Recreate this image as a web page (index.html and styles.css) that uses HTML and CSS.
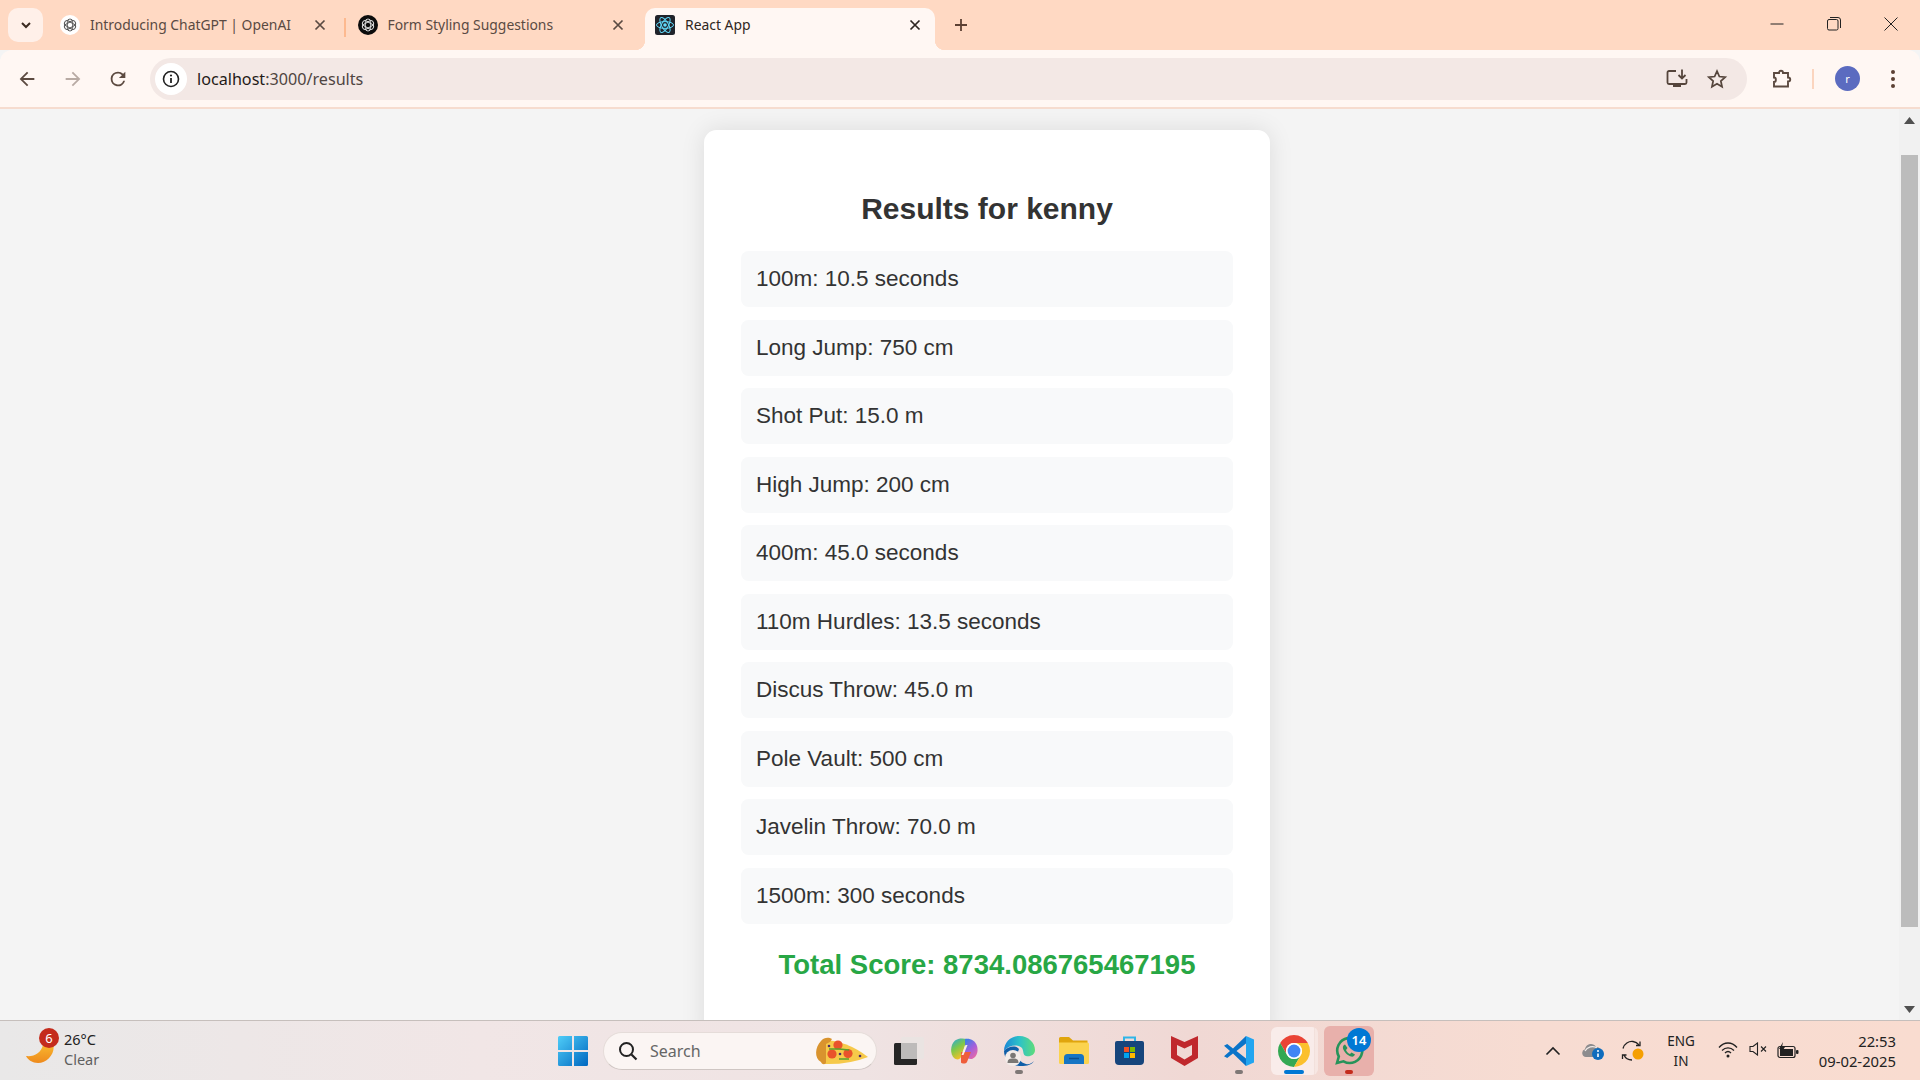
FILE: index.html
```html
<!DOCTYPE html>
<html lang="en">
<head>
<meta charset="utf-8">
<title>React App</title>
<link rel="stylesheet" href="styles.css">
</head>
<body>
<svg class="defs" width="0" height="0" aria-hidden="true">
  <symbol id="knot" viewBox="0 0 24 24">
    <g fill="none" stroke="currentColor" stroke-width="1.4">
      <rect x="8" y="3" width="8" height="18" rx="4"/>
      <rect x="8" y="3" width="8" height="18" rx="4" transform="rotate(60 12 12)"/>
      <rect x="8" y="3" width="8" height="18" rx="4" transform="rotate(120 12 12)"/>
    </g>
  </symbol>
  <symbol id="x" viewBox="0 0 12 12">
    <path d="M1.5 1.5l9 9M10.5 1.5l-9 9" fill="none" stroke="currentColor" stroke-width="1.7"/>
  </symbol>
</svg>

<header class="tabstrip">
  <button class="tab-search">
    <svg width="12" height="12" viewBox="0 0 12 12"><path d="M2 4l4 4 4-4" fill="none" stroke="#3b2a20" stroke-width="2"/></svg>
  </button>
  <div class="tabs">
    <div class="tab">
      <span class="fav fav-light"><svg width="16" height="16"><use href="#knot"/></svg></span>
      <span class="tab-title">Introducing ChatGPT | OpenAI</span>
      <svg class="tab-close" width="12" height="12"><use href="#x"/></svg>
    </div>
    <div class="tab tab-sep">
      <span class="fav fav-dark"><svg width="16" height="16"><use href="#knot"/></svg></span>
      <span class="tab-title">Form Styling Suggestions</span>
      <svg class="tab-close" width="12" height="12"><use href="#x"/></svg>
    </div>
    <div class="tab tab-active">
      <svg class="fav-react" width="20" height="20" viewBox="0 0 20 20">
        <rect width="20" height="20" rx="2.5" fill="#20232a"/>
        <g fill="none" stroke="#61dafb" stroke-width="1">
          <ellipse cx="10" cy="10" rx="8.5" ry="3.4"/>
          <ellipse cx="10" cy="10" rx="8.5" ry="3.4" transform="rotate(60 10 10)"/>
          <ellipse cx="10" cy="10" rx="8.5" ry="3.4" transform="rotate(120 10 10)"/>
        </g>
        <circle cx="10" cy="10" r="1.8" fill="#61dafb"/>
      </svg>
      <span class="tab-title">React App</span>
      <svg class="tab-close" width="12" height="12"><use href="#x"/></svg>
    </div>
  </div>
  <button class="new-tab">
    <svg width="14" height="14" viewBox="0 0 14 14"><path d="M7 1v12M1 7h12" stroke="#5c4033" stroke-width="1.8"/></svg>
  </button>
  <div class="win-controls">
    <span class="win-btn"><svg width="14" height="14" viewBox="0 0 14 14"><path d="M0.5 7h13" stroke="#222" stroke-width="1"/></svg></span>
    <span class="win-btn"><svg width="14" height="14" viewBox="0 0 14 14"><rect x="0.5" y="2.5" width="10.5" height="10.5" rx="1.5" fill="none" stroke="#222"/><path d="M3 .5h8a2.500 2.500 0 0 1 2.500 2.500v8" fill="none" stroke="#222"/></svg></span>
    <span class="win-btn"><svg width="14" height="14" viewBox="0 0 14 14"><path d="M.5.500l13 13M13.500.500l-13 13" stroke="#222" stroke-width="1"/></svg></span>
  </div>
</header>

<nav class="toolbar">
  <div class="nav-btns">
    <span class="nav-btn"><svg width="22" height="22" viewBox="0 0 24 24"><path d="M20 11H7.830l5.590-5.590L12 4l-8 8 8 8 1.410-1.410L7.830 13H20z" fill="#5c4a40"/></svg></span>
    <span class="nav-btn"><svg width="22" height="22" viewBox="0 0 24 24"><path d="M4 13h12.170l-5.590 5.590L12 20l8-8-8-8-1.410 1.410L16.170 11H4z" fill="#b8aaa3"/></svg></span>
    <span class="nav-btn"><svg width="22" height="22" viewBox="0 0 24 24"><path d="M17.650 6.350A7.960 7.960 0 0 0 12 4a8 8 0 1 0 7.730 10h-2.080A6 6 0 1 1 12 6c1.660 0 3.140.690 4.220 1.780L13 11h7V4z" fill="#5c4a40"/></svg></span>
  </div>
  <div class="omnibox">
    <span class="info-chip"><svg width="18" height="18" viewBox="0 0 18 18"><circle cx="9" cy="9" r="7.500" fill="none" stroke="#222" stroke-width="1.600"/><path d="M9 8v5" stroke="#222" stroke-width="1.800"/><circle cx="9" cy="5.500" r="1.100" fill="#222"/></svg></span>
    <span class="url"><span class="url-host">localhost</span>:3000/results</span>
    <span class="omni-icons">
      <svg width="22" height="22" viewBox="0 0 22 22"><path d="M10 3H3a1.500 1.500 0 0 0-1.500 1.500v10A1.500 1.500 0 0 0 3 16h16a1.500 1.500 0 0 0 1.500-1.500V11" fill="none" stroke="#55453c" stroke-width="1.800"/><path d="M16 1.500V10M12.500 7l3.500 3.500L19.500 7" fill="none" stroke="#55453c" stroke-width="1.800"/><path d="M7 16.500h8V19H7z" fill="#55453c"/></svg>
      <svg width="22" height="22" viewBox="0 0 24 24"><path d="M12 3.500l2.600 5.800 6.300.7-4.700 4.200 1.300 6.200L12 17.200l-5.500 3.200 1.300-6.200L3.100 10l6.300-.7z" fill="none" stroke="#55453c" stroke-width="1.900"/></svg>
    </span>
  </div>
  <div class="tool-right">
    <span class="ext"><svg width="22" height="22" viewBox="0 0 22 22"><path d="M3 5h5c0-3 4-3 4 0h5v4.500c3 0 3 4 0 4V18.500H3v-4.500c2.500 0 2.500-4.500 0-4.500z" fill="none" stroke="#5c4a40" stroke-width="1.900"/></svg></span>
    <span class="tool-sep"></span>
    <span class="avatar">r</span>
    <span class="menu"><i></i><i></i><i></i></span>
  </div>
</nav>

<div class="viewport">
  <main class="page">
    <section class="card">
      <h2 class="card-title">Results for kenny</h2>
      <ul class="results">
        <li class="result">100m: 10.5 seconds</li>
        <li class="result">Long Jump: 750 cm</li>
        <li class="result">Shot Put: 15.0 m</li>
        <li class="result">High Jump: 200 cm</li>
        <li class="result">400m: 45.0 seconds</li>
        <li class="result">110m Hurdles: 13.5 seconds</li>
        <li class="result">Discus Throw: 45.0 m</li>
        <li class="result">Pole Vault: 500 cm</li>
        <li class="result">Javelin Throw: 70.0 m</li>
        <li class="result">1500m: 300 seconds</li>
      </ul>
      <h3 class="total">Total Score: 8734.086765467195</h3>
    </section>
  </main>
  <aside class="scrollbar">
    <svg class="arrow" width="11" height="7" viewBox="0 0 11 7"><path d="M5.500 0L11 7H0z" fill="#505050"/></svg>
    <div class="track"><div class="thumb"></div></div>
    <svg class="arrow" width="11" height="7" viewBox="0 0 11 7"><path d="M0 0h11L5.500 7z" fill="#505050"/></svg>
  </aside>
</div>

<footer class="taskbar">
  <div class="weather">
    <span class="weather-icon">
      <svg width="28" height="18" viewBox="0 0 28 18"><defs><linearGradient id="moon" x1="0" y1="0" x2="0" y2="1"><stop offset="0" stop-color="#f8b62e"/><stop offset="1" stop-color="#ee8a1d"/></linearGradient></defs><path d="M0 11C8 12 15 8 17 0h10.500C29 9 21 18 12 18 6.500 18 2 15 0 11z" fill="url(#moon)"/></svg>
      <span class="weather-badge">6</span>
    </span>
    <span class="weather-text"><span class="temp">26°C</span><span class="cond">Clear</span></span>
  </div>

  <div class="apps">
    <span class="slot">
      <svg width="30" height="30" viewBox="0 0 30 30"><defs><linearGradient id="win" x1="0" y1="0" x2="1" y2="1"><stop offset="0" stop-color="#4fcdf8"/><stop offset="1" stop-color="#0067c0"/></linearGradient></defs><path d="M0 1.500A1.500 1.500 0 0 1 1.500 0H14v14H0zM16 0h12.500A1.500 1.500 0 0 1 30 1.500V14H16zM0 16h14v14H1.500A1.500 1.500 0 0 1 0 28.500zM16 16h14v12.500a1.500 1.500 0 0 1-1.500 1.500H16z" fill="url(#win)"/></svg>
    </span>
    <div class="searchbox">
      <svg width="20" height="20" viewBox="0 0 20 20"><circle cx="8.500" cy="8.500" r="6.500" fill="none" stroke="#222" stroke-width="2"/><path d="M13.500 13.500l5 5" stroke="#222" stroke-width="2.200"/></svg>
      <span class="search-label">Search</span>
      <svg class="pizza" width="54" height="28" viewBox="0 0 54 28">
        <path d="M8 3Q32 3 54 20Q34 28 9 27z" fill="#f6c94a"/>
        <path d="M7 4C10 0 15 0 18 2L16 5 12 7 12 25C12 28 8 28 7 25 0 21 1 10 7 4z" fill="#d9932e"/>
        <circle cx="24" cy="8" r="4.600" fill="#e9532b"/>
        <circle cx="18" cy="17" r="4.600" fill="#e9532b"/>
        <circle cx="34" cy="16.500" r="4.600" fill="#e9532b"/>
        <path d="M15 12l10 0M25 12l10 1M25 22l10 0" stroke="#5aa02c" stroke-width="1.400"/>
        <circle cx="46" cy="19" r="1.300" fill="#4b2a6a"/>
        <circle cx="26" cy="17" r="1.300" fill="#4b2a6a"/>
        <circle cx="15" cy="9" r="1.300" fill="#4b2a6a"/>
      </svg>
    </div>
    <div class="app-icons">
      <span class="slot">
        <svg width="30" height="28" viewBox="0 0 30 28"><rect y="6" width="23" height="22" rx="1.500" fill="#262626"/><rect x="7" width="23" height="22" rx="1.500" fill="#e9e4e2" fill-opacity=".85"/><rect x="7" y="6" width="16" height="16" fill="#bdbbba"/></svg>
      </span>
      <span class="slot">
        <svg width="28" height="26" viewBox="0 0 28 26"><defs><linearGradient id="cp1" x1="0" y1="0" x2=".5" y2="1"><stop offset="0" stop-color="#1fa6e8"/><stop offset=".5" stop-color="#7fc84a"/><stop offset="1" stop-color="#f7c027"/></linearGradient><linearGradient id="cp2" x1=".2" y1="0" x2=".8" y2="1"><stop offset="0" stop-color="#3d7fe6"/><stop offset=".5" stop-color="#a35fdc"/><stop offset="1" stop-color="#f06aa0"/></linearGradient></defs><path d="M5 2.500C8 0 13 0 17 1L11 19C10 22 6 22 4 20 0 16 0 7 5 2.500z" fill="url(#cp1)"/><path d="M15 1C20 0 25 2.500 27 8 28.500 13 27 19 22 21 19 21.500 16 20 15 17z" fill="url(#cp2)"/><path d="M11 14h10l-4 10c-1 2-5 2-6 .5z" fill="#ef5d3a"/><path d="M15.500 7h2l-4 10h-2z" fill="#fbeeea"/></svg>
      </span>
      <span class="slot">
        <svg width="31" height="30" viewBox="0 0 31 30"><defs><linearGradient id="ed" x1="0" y1=".5" x2="1" y2=".5"><stop offset="0" stop-color="#1b87d6"/><stop offset=".5" stop-color="#2cc2c8"/><stop offset="1" stop-color="#5fdc7a"/></linearGradient></defs><path d="M0 15C0 6 7 0 15.500 0 24.500 0 31 7 31 14 31 19 26 21 22 20 18.500 19 20 15 18 12 14 8 5 9 0 15z" fill="url(#ed)"/><path d="M0 15C4 10 12 9 15 13 12 19 14 26 22 28 25 29 28 27 30 25 27 30 20 30 15.500 30 7 30 0 23 0 15z" fill="#0f5ea8"/><circle cx="9" cy="22" r="8" fill="#f3ece9"/><circle cx="9" cy="19.500" r="2.800" fill="#7a7775"/><path d="M3.500 27c0-4 2.500-4.500 5.500-4.500s5.500.5 5.500 4.500z" fill="#7a7775"/></svg>
        <i class="dot dot-grey"></i>
      </span>
      <span class="slot">
        <svg width="30" height="27" viewBox="0 0 30 27"><path d="M0 1.500A1.500 1.500 0 0 1 1.500 0H10l4 3.500h14.500V12H0z" fill="#e0a50d"/><path d="M0 5.500h28.500A1.500 1.500 0 0 1 30 7v18.500a1.500 1.500 0 0 1-1.500 1.500h-27A1.500 1.500 0 0 1 0 25.500z" fill="#fbd34f"/><path d="M5 27v-6.500A3.500 3.500 0 0 1 8.500 17h13a3.500 3.500 0 0 1 3.500 3.500V27z" fill="#1675c4"/><path d="M10 21.500h10" stroke="#0c4f8e" stroke-width="1.500"/></svg>
      </span>
      <span class="slot">
        <svg width="29" height="29" viewBox="0 0 29 29"><path d="M9 6V1.500h11V6" fill="none" stroke="#2fb5e8" stroke-width="2"/><path d="M0 7a2 2 0 0 1 2-2h25a2 2 0 0 1 2 2v18a4 4 0 0 1-4 4H4a4 4 0 0 1-4-4z" fill="#16457c"/><rect x="9" y="11" width="5" height="5" fill="#f25022"/><rect x="15" y="11" width="5" height="5" fill="#7fba00"/><rect x="9" y="17" width="5" height="5" fill="#00a4ef"/><rect x="15" y="17" width="5" height="5" fill="#ffb900"/></svg>
      </span>
      <span class="slot">
        <svg width="27" height="30" viewBox="0 0 27 30"><path fill-rule="evenodd" d="M0 0l13.500 6L27 0v22L13.500 30 0 22zM6 9v10l7.500 4.500L21 19V9l-7.500 3.500z" fill="#c0282d"/></svg>
      </span>
      <span class="slot">
        <svg width="30" height="30" viewBox="0 0 30 30"><path d="M22 0L9 12.500 3.200 8 0 9.700 6 15 0 20.300 3.200 22 9 17.500 22 30V22.500L12.500 15 22 7.500z" fill="#0a74c9"/><path d="M22 0l8 3.500v23L22 30z" fill="#22a5f0"/></svg>
        <i class="dot dot-grey"></i>
      </span>
      <span class="slot">
        <span class="tile-chrome">
          <svg width="32" height="32" viewBox="2 2 44 44"><path d="M24 13H43.050A22 22 0 0 0 4.950 13L14.470 29.500A11 11 0 0 1 24 13z" fill="#ea4335"/><path d="M14.470 29.500L4.950 13A22 22 0 0 0 24 46L33.530 29.500A11 11 0 0 1 14.470 29.500z" fill="#34a853"/><path d="M33.530 29.500L24 46A22 22 0 0 0 43.050 13H24A11 11 0 0 1 33.530 29.500z" fill="#fbc02d"/><circle cx="24" cy="24" r="11" fill="#fff"/><circle cx="24" cy="24" r="8.800" fill="#4285f4"/></svg>
        </span>
        <i class="dot dot-blue"></i>
      </span>
      <span class="slot">
        <span class="tile-wa">
          <svg width="30" height="30" viewBox="0 0 30 30"><path d="M3 27l1.800-6.500A12.500 12.500 0 1 1 9.500 25.300z" fill="none" stroke="#27935a" stroke-width="2.600"/><path d="M11 8.500c-1.500.5-2.500 2-2 4 1 3.500 4.500 7 8 8 2 .5 3.500-.5 4-2l-3.500-2-1.500 1.500c-1.500-.5-3.500-2.500-4-4L13.500 12z" fill="#27935a"/></svg>
          <span class="wa-badge">14</span>
        </span>
        <i class="dot dot-red"></i>
      </span>
    </div>
  </div>

  <div class="tray">
    <span class="tray-slot"><svg width="16" height="10" viewBox="0 0 16 10"><path d="M1.500 8.500L8 2l6.500 6.500" fill="none" stroke="#222" stroke-width="1.600"/></svg></span>
    <span class="tray-slot">
      <svg width="22" height="18" viewBox="0 0 22 18"><path d="M4 15a4 4 0 0 1-1-7.800C4 2 11 0 14 5c3 0 5 2 5 5v5z" fill="#8d8c8e"/><path d="M3 9c2-4 8-6 12-3" fill="none" stroke="#f3ece9" stroke-width="1.200"/><circle cx="16" cy="12" r="6" fill="#0f6cbd"/><path d="M16 11.500v3.500" stroke="#fff" stroke-width="1.600"/><circle cx="16" cy="9" r="1" fill="#fff"/></svg>
    </span>
    <span class="tray-slot">
      <svg width="24" height="22" viewBox="0 0 24 22"><path d="M2 8.500C3 3.500 8 1 12 1.500c2.500.3 4.500 1.500 6 3.500" fill="none" stroke="#222" stroke-width="1.300"/><path d="M19 1.500V5.500h-4" fill="none" stroke="#222" stroke-width="1.300"/><path d="M3 15c1.500 3.500 4 5 8 5" fill="none" stroke="#222" stroke-width="1.300"/><path d="M1.500 19v-4h4" fill="none" stroke="#222" stroke-width="1.300"/><circle cx="17" cy="14" r="5.500" fill="#f59f00"/></svg>
    </span>
    <span class="lang"><span>ENG</span><span>IN</span></span>
    <span class="net">
      <span class="net-slot"><svg width="20" height="16" viewBox="0 0 20 16"><path d="M1 5.500C6-.500 14-.500 19 5.500M4 8.500c3.500-3.500 8.500-3.500 12 0M7 11c2-2 4-2 6 0" fill="none" stroke="#222" stroke-width="1.300"/><circle cx="10" cy="14" r="1.500" fill="#222"/></svg></span>
      <span class="net-slot"><svg width="19" height="14" viewBox="0 0 19 14"><path d="M1 4.500h3L8.500 1v12L4 9.500H1z" fill="none" stroke="#222" stroke-width="1.100"/><path d="M12 4.500l5 5M17 4.500l-5 5" stroke="#222" stroke-width="1.100"/></svg></span>
      <span class="net-slot"><svg width="22" height="17" viewBox="0 0 22 17"><rect x="1" y="4.500" width="17" height="11" rx="2" fill="none" stroke="#222" stroke-width="1.200"/><path d="M3 7h13v7H3z" fill="#222"/><rect x="19" y="8" width="2.500" height="4" rx="1" fill="#222"/><path d="M6 0L2 7h3l-1 4 4-6H5z" fill="#222"/></svg></span>
    </span>
    <span class="clock"><span>22:53</span><span>09-02-2025</span></span>
  </div>
</footer>
</body>
</html>
```

FILE: styles.css
```css
* { box-sizing: border-box; }

html, body {
  margin: 0;
  height: 100%;
}

body {
  width: 1920px;
  height: 1080px;
  overflow: hidden;
  display: flex;
  flex-direction: column;
  font-family: "Liberation Sans", Arial, sans-serif;
  background: #f4f4f4;
}

.defs { position: absolute; }

button {
  border: 0;
  padding: 0;
  background: none;
}

/* Tab strip */
.tabstrip {
  height: 50px;
  flex: none;
  display: flex;
  align-items: stretch;
  background: #ffd9c3;
  padding-left: 8px;
  font-family: "Noto Sans", sans-serif;
}

.tab-search {
  width: 35px;
  height: 34px;
  margin-top: 8px;
  border-radius: 10px;
  background: #fff0e9;
  display: flex;
  align-items: center;
  justify-content: center;
}

.tabs {
  display: flex;
  gap: 7.500px;
  margin-left: 7px;
}

.tab {
  width: 290px;
  margin-top: 8px;
  padding: 0 15px 9px 10px;
  display: flex;
  align-items: center;
  position: relative;
  color: #5a4a42;
  font-size: 13.900px;
}

.tab-sep::before {
  content: "";
  position: absolute;
  left: -4px;
  top: 10px;
  width: 2px;
  height: 19px;
  background: #fdb98f;
}

.tab-active {
  background: #fff7f3;
  border-radius: 10px 10px 0 0;
  color: #2f2622;
}

.tab-active::before,
.tab-active::after {
  content: "";
  position: absolute;
  bottom: 0;
  width: 10px;
  height: 10px;
}

.tab-active::before {
  left: -10px;
  background: radial-gradient(circle at 0 0, #ffd9c3 10px, #fff7f3 10.500px);
}

.tab-active::after {
  right: -10px;
  background: radial-gradient(circle at 100% 0, #ffd9c3 10px, #fff7f3 10.500px);
}

.fav {
  width: 20px;
  height: 20px;
  border-radius: 50%;
  display: flex;
  align-items: center;
  justify-content: center;
  flex: none;
}

.fav-light { background: #fff; color: #555; }
.fav-dark { background: #0c0c0c; color: #ddd; }
.fav-react { flex: none; }

.tab-title {
  flex: 1;
  margin-left: 10px;
  white-space: nowrap;
  overflow: hidden;
}

.tab-close { flex: none; color: #5a4a42; margin-right: -1px; }
.tab-active .tab-close { color: #2f2622; }

.new-tab {
  width: 42px;
  margin-left: 5px;
  display: flex;
  align-items: center;
  justify-content: center;
}

.win-controls {
  margin-left: auto;
  display: flex;
  padding-right: 1px;
}

.win-btn {
  width: 57px;
  display: flex;
  align-items: center;
  justify-content: center;
  padding-bottom: 3px;
}

/* Toolbar */
.toolbar {
  height: 59px;
  flex: none;
  display: flex;
  align-items: center;
  background: #fff7f3;
  border-radius: 12px 12px 0 0;
  border-bottom: 2px solid #f6dccf;
  padding-top: 1px;
}

.nav-btns {
  display: flex;
  width: 150px;
  padding-left: 4.500px;
}

.nav-btn {
  width: 45.500px;
  display: flex;
  align-items: center;
  justify-content: center;
}

.omnibox {
  width: 1597px;
  height: 42px;
  border-radius: 21px;
  background: #f3e8e5;
  display: flex;
  align-items: center;
  padding: 0 19px 0 5px;
  font-family: "Noto Sans", sans-serif;
}

.info-chip {
  width: 32px;
  height: 32px;
  border-radius: 50%;
  background: #fff;
  display: flex;
  align-items: center;
  justify-content: center;
}

.url {
  margin-left: 10px;
  font-size: 16.150px;
  color: #4f4541;
}

.url-host { color: #1f1a17; }

.omni-icons {
  margin-left: auto;
  display: flex;
  gap: 18px;
}

.tool-right {
  flex: 1;
  display: flex;
  align-items: center;
}

.ext {
  margin-left: 24px;
  display: flex;
}

.tool-sep {
  width: 2px;
  height: 20px;
  margin-left: 19px;
  background: #fbd5bf;
}

.avatar {
  width: 25px;
  height: 25px;
  margin: 0 0 2px 21px;
  border-radius: 50%;
  background: #5b6bc0;
  color: #fff;
  font: 11px/25px "Noto Sans", sans-serif;
  text-align: center;
}

.menu {
  margin-left: 31px;
  display: flex;
  flex-direction: column;
  gap: 3px;
}

.menu i {
  width: 4px;
  height: 4px;
  border-radius: 50%;
  background: #5c4033;
}

/* Page */
.viewport {
  height: 911px;
  flex: none;
  display: flex;
  overflow: hidden;
}

.page {
  flex: 1;
  padding: 21px 0 0 704px;
  background: #f4f4f4;
  overflow: hidden;
}

.card {
  width: 566px;
  padding: 62px 37px 62px;
  background: #fff;
  border-radius: 12.500px;
  box-shadow: 0 0 25px rgba(0, 0, 0, .1);
}

.card-title {
  margin: 0 0 25px;
  font-size: 30px;
  line-height: 34px;
  font-weight: 700;
  text-align: center;
  color: #333;
}

.results {
  list-style: none;
  margin: 0;
  padding: 0;
  display: flex;
  flex-direction: column;
  gap: 12.500px;
}

.result {
  padding: 15px;
  font-size: 22.500px;
  line-height: 26px;
  background: #f8f9fa;
  border-radius: 7.500px;
  color: #333;
}

.total {
  margin: 25px 0 0;
  font-size: 27.500px;
  line-height: 32px;
  font-weight: 700;
  text-align: center;
  color: #28a745;
}

.scrollbar {
  width: 21px;
  flex: none;
  background: #f1f1f1;
  display: flex;
  flex-direction: column;
  align-items: center;
  padding: 8px 0 0;
}

.arrow { flex: none; }

.track {
  flex: 1;
  align-self: stretch;
  padding: 31px 2px 0;
}

.thumb {
  height: 772px;
  background: #bcbcbc;
}

.scrollbar .arrow:last-child { margin-bottom: 7px; }

/* Taskbar */
.taskbar {
  height: 60px;
  flex: none;
  display: flex;
  align-items: stretch;
  border-top: 1px solid #c6bfbc;
  background: linear-gradient(90deg, #e9e8e8 0, #f1e6e6 25%, #efe3e3 45%, #f0d8d4 62%, #f7dcd2 80%, #f9dcd0 100%);
  font-family: "Noto Sans", sans-serif;
}

.weather {
  width: 545px;
  flex: none;
  display: flex;
  align-items: center;
  padding-left: 26px;
}

.weather-icon {
  position: relative;
  width: 38px;
  height: 35px;
  margin-bottom: 10px;
  display: flex;
  align-items: flex-end;
}

.weather-badge {
  position: absolute;
  left: 13px;
  top: 0;
  width: 20px;
  height: 20px;
  border-radius: 50%;
  background: #c42b1c;
  color: #fff;
  font-size: 13px;
  line-height: 20px;
  text-align: center;
}

.weather-text {
  display: flex;
  flex-direction: column;
  margin-bottom: 4px;
  font-size: 14.500px;
  line-height: 20px;
  color: #222;
}

.cond { color: #5f5f5f; }

.apps {
  display: flex;
  align-items: stretch;
}

.slot {
  width: 55px;
  display: flex;
  align-items: center;
  justify-content: center;
  position: relative;
  flex: none;
}

.searchbox {
  width: 274px;
  height: 38px;
  margin: auto 0 auto 3px;
  border-radius: 19px;
  background: #fbf5f3;
  border: 1px solid #e5dcd9;
  border-bottom-color: #cfc6c3;
  display: flex;
  align-items: center;
  padding: 0 8px 0 14px;
}

.search-label {
  margin-left: 12px;
  font-size: 16px;
  color: #666;
}

.pizza { margin-left: auto; }

.app-icons {
  display: flex;
  margin-left: 4.500px;
}

.dot {
  position: absolute;
  left: 50%;
  bottom: 6px;
  height: 4px;
  border-radius: 2px;
  transform: translateX(-50%);
}

.dot-grey { width: 8px; background: #7f7876; }
.dot-blue { width: 20px; background: #0078d4; }
.dot-red { width: 8px; background: #c42b1c; }

.tile-chrome {
  width: 47px;
  height: 48px;
  border-radius: 6px;
  background: linear-gradient(90deg, #f9ecea 43px, #eedad5 43px, #f7e7e3 44px);
  display: flex;
  align-items: center;
  justify-content: center;
}

.tile-wa {
  width: 50px;
  height: 50px;
  border-radius: 6px;
  background: #e8b0ab;
  display: flex;
  align-items: center;
  justify-content: center;
  position: relative;
}

.wa-badge {
  position: absolute;
  right: 3px;
  top: 2px;
  width: 24px;
  height: 24px;
  border-radius: 50%;
  background: #0078d4;
  color: #fff;
  font-size: 13px;
  font-weight: 600;
  line-height: 24px;
  text-align: center;
}

.tray {
  margin-left: auto;
  display: flex;
  align-items: center;
  padding-right: 24px;
  color: #222;
  font-size: 13.500px;
}

.tray-slot {
  width: 40px;
  display: flex;
  justify-content: center;
}

.lang {
  width: 56px;
  display: flex;
  flex-direction: column;
  align-items: center;
  line-height: 20px;
}

.net {
  display: flex;
  margin-left: 4px;
}

.net-slot {
  width: 30px;
  display: flex;
  justify-content: center;
}

.clock {
  width: 93px;
  display: flex;
  flex-direction: column;
  align-items: flex-end;
  font-size: 14.800px;
  line-height: 20px;
}
```
